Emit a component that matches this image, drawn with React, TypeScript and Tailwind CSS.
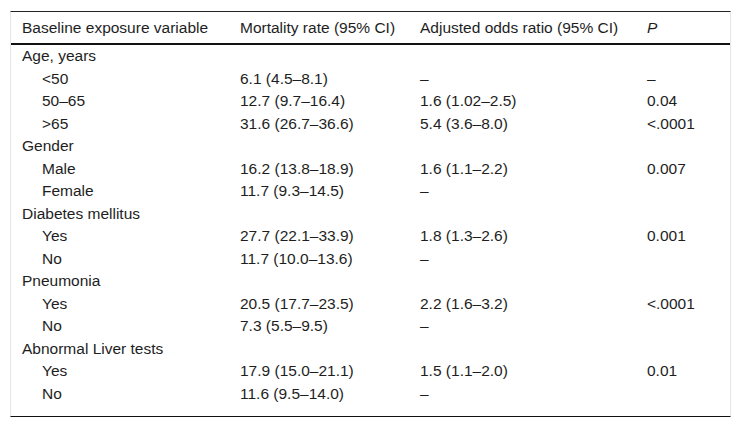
const rows: { label: string; indent?: boolean; rate?: string; or?: string; p?: string }[] = [
  { label: "Age, years" },
  { label: "<50", indent: true, rate: "6.1 (4.5–8.1)", or: "–", p: "–" },
  { label: "50–65", indent: true, rate: "12.7 (9.7–16.4)", or: "1.6 (1.02–2.5)", p: "0.04" },
  { label: ">65", indent: true, rate: "31.6 (26.7–36.6)", or: "5.4 (3.6–8.0)", p: "<.0001" },
  { label: "Gender" },
  { label: "Male", indent: true, rate: "16.2 (13.8–18.9)", or: "1.6 (1.1–2.2)", p: "0.007" },
  { label: "Female", indent: true, rate: "11.7 (9.3–14.5)", or: "–" },
  { label: "Diabetes mellitus" },
  { label: "Yes", indent: true, rate: "27.7 (22.1–33.9)", or: "1.8 (1.3–2.6)", p: "0.001" },
  { label: "No", indent: true, rate: "11.7 (10.0–13.6)", or: "–" },
  { label: "Pneumonia" },
  { label: "Yes", indent: true, rate: "20.5 (17.7–23.5)", or: "2.2 (1.6–3.2)", p: "<.0001" },
  { label: "No", indent: true, rate: "7.3 (5.5–9.5)", or: "–" },
  { label: "Abnormal Liver tests" },
  { label: "Yes", indent: true, rate: "17.9 (15.0–21.1)", or: "1.5 (1.1–2.0)", p: "0.01" },
  { label: "No", indent: true, rate: "11.6 (9.5–14.0)", or: "–" },
];

export default function App() {
  return (
    <div className="w-[741px] h-[430px] bg-white pt-[11px] pl-[10px] font-['Liberation_Sans',Arial,sans-serif] text-[15.5px] text-[#1e1e1e]">
      <div className="w-[721px] border-x border-x-[#e6e6e6] border-t border-t-[#222] border-b border-b-[#111] pb-[11px]">
        <table className="w-full table-fixed border-collapse">
          <colgroup>
            <col className="w-[218px]" />
            <col className="w-[180px]" />
            <col className="w-[227px]" />
            <col />
          </colgroup>
          <thead>
            <tr className="h-[32px] border-b-2 border-b-[#111]">
              <th className="pl-[11px] text-left font-normal">Baseline exposure variable</th>
              <th className="pl-[11px] text-left font-normal">Mortality rate (95% CI)</th>
              <th className="pl-[11px] text-left font-normal">Adjusted odds ratio (95% CI)</th>
              <th className="pl-[11px] text-left font-normal italic">P</th>
            </tr>
          </thead>
          <tbody>
            {rows.map((r, i) => (
              <tr key={i} className="h-[22.5px] leading-[22.5px]">
                <td className={r.indent ? "pl-[31px] py-0" : "pl-[11px] py-0"}>{r.label}</td>
                <td className="pl-[11px] py-0">{r.rate ?? ""}</td>
                <td className="pl-[11px] py-0">{r.or ?? ""}</td>
                <td className="pl-[11px] py-0">{r.p ?? ""}</td>
              </tr>
            ))}
          </tbody>
        </table>
      </div>
    </div>
  );
}
